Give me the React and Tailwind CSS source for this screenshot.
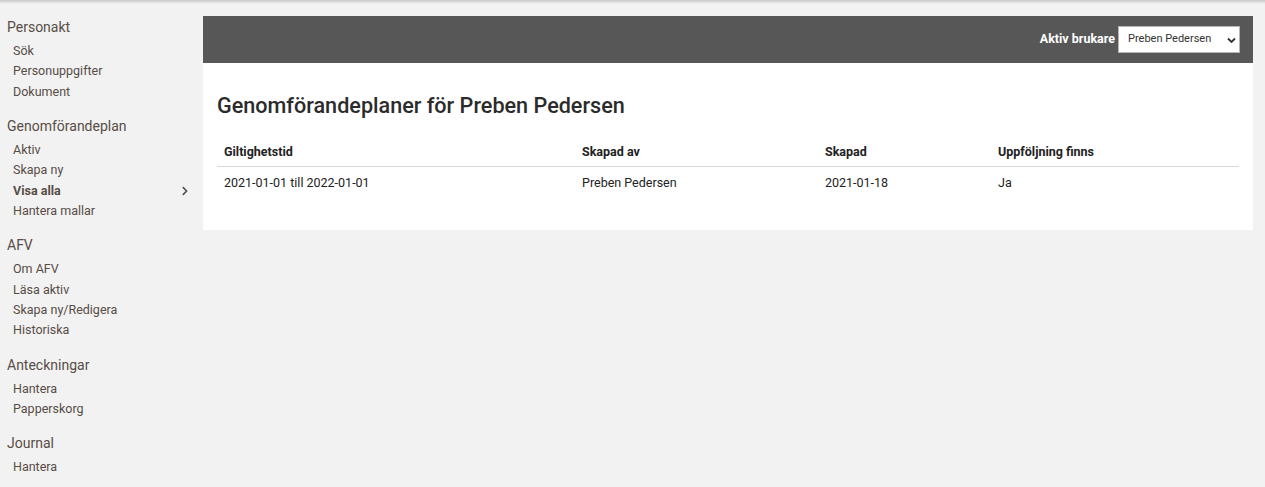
import { FaChevronRight } from 'react-icons/fa';

const MENU = [
  { title: 'Personakt', items: ['Sök', 'Personuppgifter', 'Dokument'] },
  {
    title: 'Genomförandeplan',
    items: ['Aktiv', 'Skapa ny', 'Visa alla', 'Hantera mallar'],
    active: 'Visa alla',
  },
  {
    title: 'AFV',
    items: ['Om AFV', 'Läsa aktiv', 'Skapa ny/Redigera', 'Historiska'],
  },
  { title: 'Anteckningar', items: ['Hantera', 'Papperskorg'] },
  { title: 'Journal', items: ['Hantera'] },
];

const ROWS = [
  {
    period: '2021-01-01 till 2022-01-01',
    createdBy: 'Preben Pedersen',
    created: '2021-01-18',
    followUp: 'Ja',
  },
];

const Sidebar = () => (
  <nav className="w-[203px] shrink-0 pt-[17px] text-[#574d47]">
    {MENU.map((section) => (
      <div key={section.title} className="mb-[14px]">
        <h2 className="pl-[7px] text-[14px] leading-[20px] mb-[4px]">
          {section.title}
        </h2>
        <ul>
          {section.items.map((item) => {
            const active = item === section.active;
            return (
              <li
                key={item}
                className={`flex items-center justify-between pl-[13px] pr-[13px] text-[12.5px] leading-[20.33px] ${
                  active ? 'font-bold' : ''
                }`}
              >
                {item}
                {active && <FaChevronRight className="text-[10px]" />}
              </li>
            );
          })}
        </ul>
      </div>
    ))}
  </nav>
);

const App = () => {
  return (
    <div
      className="min-h-[487px] bg-[#f2f2f2] relative"
      style={{ fontFamily: 'Roboto, "Liberation Sans", sans-serif' }}
    >
      <div className="absolute top-0 left-0 right-0 h-[4px] bg-gradient-to-b from-[#c9c9c9] to-transparent" />
      <div className="flex">
        <Sidebar />

        <main className="flex-1 pt-[16px] pr-[12px]">
          <div className="bg-white">
            {/* Active user bar */}
            <div className="h-[47px] bg-[#575757] flex items-center justify-end pr-[13px] gap-[3px]">
              <span className="text-white text-[12.5px] font-bold">
                Aktiv brukare
              </span>
              <div className="relative w-[122px] h-[27px] bg-white border border-[#b5b5b5] flex items-center pl-[9px] text-[11px] text-[#333]">
                Preben Pedersen
                <svg
                  className="absolute right-[3px] top-[10px]"
                  width="9"
                  height="7"
                  viewBox="0 0 9 7"
                >
                  <path
                    d="M1 1.5 L4.5 5 L8 1.5"
                    stroke="#333"
                    strokeWidth="1.8"
                    fill="none"
                  />
                </svg>
              </div>
            </div>

            <div className="px-[14px] pt-[30px] pb-[37px]">
              <h1 className="text-[21.6px] font-medium text-[#2b2b2b] leading-[26px] mb-[24px]">
                Genomförandeplaner för Preben Pedersen
              </h1>

              <table className="w-full text-[12.5px] text-[#222] border-collapse">
                <thead>
                  <tr className="border-b border-[#d9d9d9]">
                    <th className="w-[358px] text-left font-bold px-[7px] pb-[4px]">
                      Giltighetstid
                    </th>
                    <th className="w-[243px] text-left font-bold px-[7px] pb-[4px]">
                      Skapad av
                    </th>
                    <th className="w-[173px] text-left font-bold px-[7px] pb-[4px]">
                      Skapad
                    </th>
                    <th className="text-left font-bold px-[7px] pb-[4px]">
                      Uppföljning finns
                    </th>
                  </tr>
                </thead>
                <tbody>
                  {ROWS.map((row) => (
                    <tr key={row.period}>
                      <td className="px-[7px] pt-[7px]">{row.period}</td>
                      <td className="px-[7px] pt-[7px]">{row.createdBy}</td>
                      <td className="px-[7px] pt-[7px]">{row.created}</td>
                      <td className="px-[7px] pt-[7px]">{row.followUp}</td>
                    </tr>
                  ))}
                </tbody>
              </table>
            </div>
          </div>
        </main>
      </div>
    </div>
  );
};

export default App;
